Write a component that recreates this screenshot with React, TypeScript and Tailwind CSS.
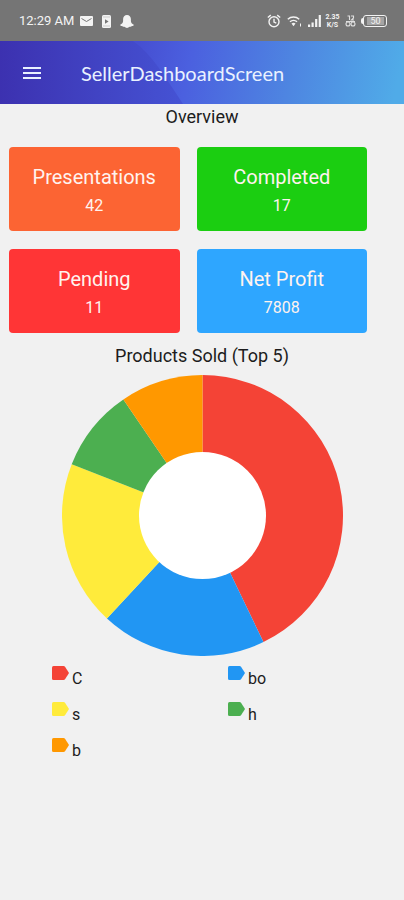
import { MdMenu } from "react-icons/md";

const stats = [
  { label: "Presentations", value: 42, color: "bg-[#fc6433]" },
  { label: "Completed", value: 17, color: "bg-[#1bce11]" },
  { label: "Pending", value: 11, color: "bg-[#ff3536]" },
  { label: "Net Profit", value: 7808, color: "bg-[#2ea6ff]" },
];

const products = [
  { name: "C", sold: 9, color: "#f44336" },
  { name: "bo", sold: 4, color: "#2196f3" },
  { name: "s", sold: 4, color: "#ffeb3b" },
  { name: "h", sold: 2, color: "#4caf50" },
  { name: "b", sold: 2, color: "#ff9800" },
];

function StatusBar() {
  return (
    <div className="flex h-[41px] items-center justify-between bg-[#757575] pt-px pr-[17px] pl-[19px] text-[#f3f3f3]">
      <div className="flex items-center">
        <span className="text-[13px]">12:29 AM</span>
        <svg className="ml-[6px] h-[10px] w-[13px]" viewBox="0 0 13 10">
          <rect width="13" height="10" rx="1" fill="currentColor" />
          <path d="M1.5 2.5l5 3 5-3" fill="none" stroke="#757575" />
        </svg>
        <svg className="ml-[9px] h-[13px] w-[9px]" viewBox="0 0 9 13">
          <rect width="9" height="13" rx="1.5" fill="currentColor" />
          <path d="M3 4.2l3.6 2.3L3 8.8z" fill="#757575" />
          <path d="M1 2h7M1 11h7" stroke="#bbb" strokeWidth=".7" />
        </svg>
        <svg className="ml-[9px] h-[13px] w-[14px]" viewBox="0 0 14 13" fill="currentColor">
          <path d="M7 0C9.4 0 10.9 1.7 10.9 4v2.1c.1 1.9 1.1 3 2.9 3.6.2.9-.9 1.2-2 1.4-.3.9-.9.8-2 .7C8.800 12.200 8 13 7 13s-1.800-.8-2.800-1.200c-1.100.1-1.700.2-2-.7-1.100-.2-2.200-.5-2-1.400C2 9.100 3 8 3.100 6.100V4C3.100 1.700 4.600 0 7 0z" />
        </svg>
      </div>

      <div className="flex items-center">
        <svg
          className="size-[14px]"
          viewBox="0 0 14 14"
          fill="none"
          stroke="currentColor"
          strokeWidth="1.4"
        >
          <circle cx="7" cy="7.7" r="5" />
          <path d="M7 4.8v3.3l2.3 1M.8 3.5l3-2.4M13.2 3.5l-3-2.4" />
        </svg>
        <svg
          className="ml-[6px] h-[12px] w-[15px]"
          viewBox="0 0 15 12"
          fill="none"
          stroke="currentColor"
          strokeWidth="1.5"
        >
          <path d="M.8 4.2a8.5 8.5 0 0 1 11.4 0M3 6.8a5.2 5.2 0 0 1 7 0" />
          <path d="M4.500 8.600a3 3 0 0 1 4 0l-2 2.600z" fill="currentColor" stroke="none" />
          <path d="M13.500 8.500v3" strokeWidth="1" />
        </svg>
        <svg className="ml-[6px] h-[12px] w-[13px]" viewBox="0 0 13 12" fill="currentColor">
          <path d="M0 9.500h2.200V12H0zM3.500 7.500h2.200V12H3.500zM7.100 4h2.200v8H7.100zM10.700 0h2.200v12h-2.200z" />
        </svg>
        <div className="ml-1 flex w-[15px] flex-col items-center text-[7px] leading-[8px] font-bold">
          <span>2.35</span>
          <span>K/S</span>
        </div>
        <svg
          className="ml-[5px] h-[12px] w-[11px]"
          viewBox="0 0 11 12"
          fill="none"
          stroke="currentColor"
          strokeWidth="1.1"
          opacity=".85"
        >
          <path d="M2.500 1h2v4M6 1h2.500v2L6.500 5h2.500M1 6.500h9" />
          <circle cx="3" cy="9" r="2" />
          <circle cx="8" cy="9" r="2" />
        </svg>
        <div className="ml-[5px] flex items-center">
          <span className="h-[6px] w-[2px] rounded-l bg-[#f3f3f3]" />
          <span className="flex h-[12px] w-[24px] items-center justify-end rounded-[3px] border border-[#f3f3f3] pr-[2px]">
            <span className="flex h-[8px] w-[17px] items-center justify-center bg-[#a5a5a5] text-[9px] leading-[8px]">
              50
            </span>
          </span>
        </div>
      </div>
    </div>
  );
}

function Header() {
  return (
    <header className="relative h-[63px] bg-linear-to-r from-[#3c31b0] via-[#4656d8] to-[#50abe8]">
      <svg
        className="absolute inset-0 size-full"
        viewBox="0 0 404 63"
        preserveAspectRatio="none"
        aria-hidden="true"
      >
        <defs>
          <linearGradient
            id="sweep"
            gradientUnits="userSpaceOnUse"
            x1="140"
            y1="0"
            x2="396"
            y2="50"
          >
            <stop offset="0" stopColor="#464fd2" />
            <stop offset=".2" stopColor="#4b60df" />
            <stop offset=".6" stopColor="#4e86e1" />
            <stop offset="1" stopColor="#50abe8" />
          </linearGradient>
        </defs>
        <path d="M133 0C153 14 165 36 183 63H404V0z" fill="url(#sweep)" />
      </svg>
      <div className="relative flex h-full items-center gap-[37px] pl-5 text-[#e9f1ff]">
        <button type="button" aria-label="Open menu">
          <MdMenu className="size-6" />
        </button>
        <h1 className="pt-px font-['Lato',sans-serif] text-xl">SellerDashboardScreen</h1>
      </div>
    </header>
  );
}

function StatCard({ label, value, color }: (typeof stats)[number]) {
  return (
    <div className={`flex h-[84px] flex-col items-center rounded-[4px] pt-4 text-[#fff3ef] ${color}`}>
      <span className="text-xl leading-7">{label}</span>
      <span className="text-base leading-[30px]">{value}</span>
    </div>
  );
}

const total = products.reduce((sum, p) => sum + p.sold, 0);

// point on a circle of radius r, measured clockwise from 12 o'clock
function point(share: number, r: number) {
  const a = share * 2 * Math.PI;
  return `${r * Math.sin(a)} ${-r * Math.cos(a)}`;
}

function DonutChart() {
  let sold = 0;

  return (
    <svg
      className="mx-auto mt-[6px] w-[281px]"
      viewBox="-140.5 -140.5 281 281"
      role="img"
      aria-label="Products sold"
    >
      {products.map((p) => {
        const from = sold / total;
        sold += p.sold;
        const to = sold / total;
        return (
          <path
            key={p.name}
            d={`M0 0L${point(from, 140.5)}A140.5 140.5 0 0 1 ${point(to, 140.5)}Z`}
            fill={p.color}
          />
        );
      })}
      <circle r="63.5" fill="#fff" />
    </svg>
  );
}

function Legend() {
  return (
    <ul className="grid grid-cols-2 pt-[10px] pl-[52px]">
      {products.map((p) => (
        <li key={p.name} className="flex h-9 items-start gap-[3px]">
          <svg className="h-[14px] w-[17px]" viewBox="0 0 17 14">
            <path
              d="M1.5 0H11.5Q12.5 0 13.2 1L17 7l-3.8 6Q12.5 14 11.5 14H1.5Q0 14 0 12.5V1.5Q0 0 1.5 0z"
              fill={p.color}
            />
          </svg>
          <span className="pt-[3px] text-base leading-5">{p.name}</span>
        </li>
      ))}
    </ul>
  );
}

export default function App() {
  return (
    <div className="min-h-screen bg-[#f1f1f1] font-['Roboto',sans-serif] text-[#1c1c1c]">
      <StatusBar />
      <Header />
      <main>
        <h2 className="text-center text-lg leading-[26px]">Overview</h2>
        <div className="grid grid-cols-2 gap-x-[17px] gap-y-[18px] pt-[17px] pr-[37px] pl-[9px]">
          {stats.map((s) => (
            <StatCard key={s.label} {...s} />
          ))}
        </div>
        <h2 className="mt-[10px] text-center text-lg leading-[26px]">
          Products Sold (Top 5)
        </h2>
        <DonutChart />
        <Legend />
      </main>
    </div>
  );
}
